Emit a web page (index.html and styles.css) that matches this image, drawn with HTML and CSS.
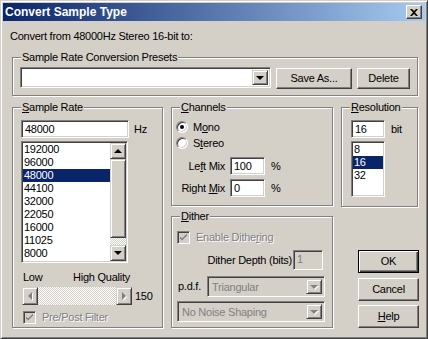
FILE: index.html
```html
<!DOCTYPE html>
<html lang="en">
<head>
  <meta charset="UTF-8" />
  <title>Convert Sample Type</title>
  <link rel="stylesheet" href="styles.css">
</head>
<body>
  <div class="window">
    <div class="titlebar">
      <span class="title">Convert Sample Type</span>
      <button class="close-btn">
        <svg width="8" height="7" viewBox="0 0 8 7"><path d="M0 0h2l2 2 2-2h2L5 3.5 8 7H6L4 5 2 7H0l3-3.5z" fill="#000"/></svg>
      </button>
    </div>

    <div class="dialog">
      <p class="intro">Convert from 48000Hz Stereo 16-bit to:</p>

      <div class="group presets">
        <span class="group-title">Sample Rate Conversion Presets</span>
        <div class="field combo preset-combo">
          <span class="combo-text"></span>
          <span class="drop-btn"><i class="arrow-down"></i></span>
        </div>
        <button class="btn save-btn">Save As...</button>
        <button class="btn delete-btn">Delete</button>
      </div>

      <div class="main-row">
        <!-- sample rate -->
        <div class="group sample-rate">
          <span class="group-title"><u>S</u>ample Rate</span>
          <div class="input-row">
            <div class="field input rate-input">48000</div>
            <span class="unit">Hz</span>
          </div>
          <div class="field listbox rate-list">
            <ul class="items">
              <li>192000</li>
              <li>96000</li>
              <li class="selected">48000</li>
              <li>44100</li>
              <li>32000</li>
              <li>22050</li>
              <li>16000</li>
              <li>11025</li>
              <li>8000</li>
              <li>6000</li>
            </ul>
            <div class="vscroll">
              <span class="sb-btn"><i class="arrow-up"></i></span>
              <span class="sb-btn sb-thumb"></span>
              <span class="sb-track"></span>
              <span class="sb-btn"><i class="arrow-down"></i></span>
            </div>
          </div>
          <div class="quality-labels">
            <span>Low</span>
            <span>High Quality</span>
          </div>
          <div class="slider-row">
            <div class="hscroll">
              <span class="sb-btn"><i class="arrow-left"></i></span>
              <span class="sb-track"></span>
              <span class="sb-btn"><i class="arrow-right"></i></span>
            </div>
            <span class="slider-value">150</span>
          </div>
          <div class="check-row filter-row">
            <span class="field check disabled">
              <svg width="7" height="7" viewBox="0 0 7 7"><path d="M0 2.5l2 2 5-5v2l-5 5-2-2z" fill="#808080"/></svg>
            </span>
            <span class="disabled-text">Pre/Post Filter</span>
          </div>
        </div>

        <!-- channels + dither -->
        <div class="middle-col">
          <div class="group channels">
            <span class="group-title"><u>C</u>hannels</span>
            <div class="radio-row">
              <span class="radio checked"></span>
              <span>M<u>o</u>no</span>
            </div>
            <div class="radio-row">
              <span class="radio"></span>
              <span>S<u>t</u>ereo</span>
            </div>
            <div class="mix-row left-mix">
              <span class="mix-label">Le<u>f</u>t Mix</span>
              <div class="field input mix-input">100</div>
              <span class="unit">%</span>
            </div>
            <div class="mix-row right-mix">
              <span class="mix-label">Right <u>M</u>ix</span>
              <div class="field input mix-input">0</div>
              <span class="unit">%</span>
            </div>
          </div>

          <div class="group dither">
            <span class="group-title"><u>D</u>ither</span>
            <div class="check-row">
              <span class="field check disabled">
                <svg width="7" height="7" viewBox="0 0 7 7"><path d="M0 2.5l2 2 5-5v2l-5 5-2-2z" fill="#808080"/></svg>
              </span>
              <span class="disabled-text">Enable Dithe<u>r</u>ing</span>
            </div>
            <div class="depth-row">
              <span>Dither Depth (bits)</span>
              <div class="field input depth-input disabled">1</div>
            </div>
            <div class="pdf-row">
              <span>p.d.f.</span>
              <div class="field combo pdf-combo disabled">
                <span class="combo-text">Triangular</span>
                <span class="drop-btn"><i class="arrow-down"></i></span>
              </div>
            </div>
            <div class="field combo noise-combo disabled">
              <span class="combo-text">No Noise Shaping</span>
              <span class="drop-btn"><i class="arrow-down"></i></span>
            </div>
          </div>
        </div>

        <!-- resolution + buttons -->
        <div class="right-col">
          <div class="group resolution">
            <span class="group-title"><u>R</u>esolution</span>
            <div class="input-row">
              <div class="field input res-input">16</div>
              <span class="unit">bit</span>
            </div>
            <div class="field listbox res-list">
              <ul class="items">
                <li>8</li>
                <li class="selected">16</li>
                <li>32</li>
              </ul>
            </div>
          </div>
          <button class="btn action-btn default-btn">OK</button>
          <button class="btn action-btn cancel-btn">Cancel</button>
          <button class="btn action-btn help-btn"><u>H</u>elp</button>
        </div>
      </div>
    </div>
  </div>
</body>
</html>
```

FILE: styles.css
```css
* {
  box-sizing: border-box;
  margin: 0;
  padding: 0;
}

body {
  font-family: "Liberation Sans", Arial, sans-serif;
  font-size: 11px;
  line-height: 13px;
  letter-spacing: -0.25px;
  color: #000;
  background: #d4d0c8;
}

button {
  font: inherit;
  color: inherit;
  letter-spacing: inherit;
}

ul {
  list-style: none;
}

/* window frame */
.window {
  width: 428px;
  height: 339px;
  background: #d4d0c8;
  border: 1px solid;
  border-color: #d4d0c8 #404040 #404040 #d4d0c8;
  box-shadow: inset 1px 1px 0 #fff, inset -1px -1px 0 #808080;
  padding: 2px;
}

.titlebar {
  height: 18px;
  display: flex;
  align-items: center;
  justify-content: space-between;
  padding: 0 3px 0 2px;
  background: linear-gradient(to right, #0a246a, #a6caf0);
}

.title {
  color: #fff;
  font-weight: bold;
  font-size: 12px;
  letter-spacing: 0;
}

.close-btn {
  width: 16px;
  height: 14px;
  display: flex;
  align-items: center;
  justify-content: center;
  background: #d4d0c8;
  border: 1px solid;
  border-color: #fff #404040 #404040 #fff;
  box-shadow: inset -1px -1px 0 #808080;
}

/* common 3d pieces */
.btn {
  height: 21px;
  background: #d4d0c8;
  border: 1px solid;
  border-color: #fff #404040 #404040 #fff;
  box-shadow: inset -1px -1px 0 #808080, inset 1px 1px 0 #d4d0c8;
}

.field {
  background: #fff;
  border: 1px solid;
  border-color: #808080 #fff #fff #808080;
  box-shadow: inset 1px 1px 0 #404040, inset -1px -1px 0 #d4d0c8;
}

.field.disabled {
  background: #d4d0c8;
  color: #808080;
}

.disabled-text {
  color: #808080;
  text-shadow: 1px 1px 0 #fff;
}

.input {
  height: 18px;
  padding: 2px 0 0 3px;
}

.combo {
  height: 21px;
  padding: 2px;
  display: flex;
  align-items: stretch;
}

.combo-text {
  flex: 1;
  padding: 2px 0 0 2px;
}

.drop-btn,
.sb-btn {
  width: 16px;
  flex: none;
  display: flex;
  align-items: center;
  justify-content: center;
  background: #d4d0c8;
  border: 1px solid;
  border-color: #d4d0c8 #404040 #404040 #d4d0c8;
  box-shadow: inset 1px 1px 0 #fff, inset -1px -1px 0 #808080;
}

.arrow-down,
.arrow-up,
.arrow-left,
.arrow-right {
  width: 0;
  height: 0;
  border-style: solid;
  border-color: transparent;
}

.arrow-down {
  border-width: 4px 4px 0 4px;
  border-top-color: #000;
}

.arrow-up {
  border-width: 0 4px 4px 4px;
  border-bottom-color: #000;
}

.arrow-left {
  border-width: 4px 4px 4px 0;
  border-right-color: #808080;
  filter: drop-shadow(1px 1px 0 #fff);
}

.arrow-right {
  border-width: 4px 0 4px 4px;
  border-left-color: #808080;
  filter: drop-shadow(1px 1px 0 #fff);
}

.disabled .arrow-down {
  border-top-color: #808080;
  filter: drop-shadow(1px 1px 0 #fff);
}

.sb-track {
  flex: 1;
  background: repeating-conic-gradient(#d4d0c8 0 25%, #fff 0 50%) 0 0 / 2px 2px;
}

.check {
  width: 13px;
  height: 13px;
  display: flex;
  align-items: center;
  justify-content: center;
  flex: none;
}

.radio {
  width: 12px;
  height: 12px;
  flex: none;
  border-radius: 50%;
  background: #fff;
  border: 1px solid;
  border-color: #808080 #fff #fff #808080;
  box-shadow: inset 1px 1px 0 #404040, inset -1px -1px 0 #d4d0c8;
  display: flex;
  align-items: center;
  justify-content: center;
}

.radio.checked::after {
  content: "";
  width: 4px;
  height: 4px;
  border-radius: 50%;
  background: #000;
}

/* group boxes */
.group {
  position: relative;
  border: 1px solid #808080;
  box-shadow: inset 1px 1px 0 #fff, 1px 1px 0 #fff;
}

.group-title {
  position: absolute;
  top: -7px;
  left: 8px;
  padding: 0 1px;
  background: #d4d0c8;
}

/* layout */
.dialog {
  padding: 9px 7px 0 9px;
}

.intro {
  margin-left: -2px;
}

.presets {
  margin-top: 14px;
  height: 39px;
  display: flex;
  align-items: flex-start;
  padding: 9px 0 0 7px;
}

.preset-combo {
  width: 251px;
}

.save-btn {
  width: 76px;
  margin: 1px 0 0 5px;
}

.delete-btn {
  width: 53px;
  margin: 1px 0 0 5px;
}

.main-row {
  margin-top: 11px;
  display: flex;
  gap: 8px;
}

.sample-rate {
  width: 151px;
  height: 221px;
  padding: 12px 0 0 8px;
}

.input-row {
  display: flex;
  align-items: center;
}

.unit {
  margin-left: 5px;
}

.rate-input {
  width: 108px;
}

.listbox {
  margin-top: 3px;
  padding: 1px;
  display: flex;
  overflow: hidden;
}

.rate-list {
  width: 107px;
  height: 122px;
}

.items {
  flex: 1;
  overflow: hidden;
}

.items li {
  height: 13px;
  padding-left: 1px;
}

.items li.selected {
  background: #0a246a;
  color: #fff;
}

.vscroll {
  width: 16px;
  display: flex;
  flex-direction: column;
}

.vscroll .sb-btn {
  height: 16px;
}

.vscroll .sb-thumb {
  height: 79px;
}

.quality-labels {
  width: 109px;
  margin-top: 8px;
  padding-left: 2px;
  display: flex;
  justify-content: space-between;
}

.slider-row {
  margin-top: 3px;
  display: flex;
  align-items: center;
}

.hscroll {
  width: 110px;
  height: 18px;
  margin-left: 1px;
  display: flex;
}

.slider-value {
  margin-left: 3px;
}

.check-row {
  display: flex;
  align-items: center;
  height: 16px;
  gap: 6px;
}

.filter-row {
  margin: 4px 0 0 2px;
}

.middle-col {
  width: 162px;
  display: flex;
  flex-direction: column;
  gap: 10px;
}

.channels {
  height: 99px;
  padding: 11px 0 0 4px;
}

.radio-row {
  height: 16px;
  display: flex;
  align-items: center;
  gap: 5px;
}

.mix-row {
  display: flex;
  align-items: center;
}

.left-mix {
  margin-top: 6px;
}

.right-mix {
  margin-top: 4px;
}

.mix-label {
  width: 49px;
  text-align: right;
  margin-right: 5px;
}

.mix-input {
  width: 35px;
}

.mix-row .unit {
  margin-left: 6px;
}

.dither {
  height: 112px;
  padding: 12px 7px 0 5px;
}

.depth-row {
  margin-top: 5px;
  display: flex;
  align-items: center;
  justify-content: flex-end;
  gap: 1px;
}

.depth-input {
  width: 30px;
  height: 20px;
  margin-right: 2px;
}

.pdf-row {
  margin-top: 6px;
  display: flex;
  align-items: center;
  justify-content: space-between;
  padding-left: 1px;
}

.pdf-combo {
  width: 118px;
}

.noise-combo {
  margin-top: 4px;
}

.right-col {
  width: 77px;
  display: flex;
  flex-direction: column;
  align-items: flex-end;
}

.resolution {
  align-self: stretch;
  height: 100px;
  padding: 12px 0 0 9px;
}

.res-input {
  width: 34px;
}

.resolution .unit {
  margin-left: 6px;
}

.res-list {
  width: 34px;
  height: 56px;
}

.action-btn {
  width: 61px;
  height: 23px;
  margin-right: -1px;
}

.default-btn {
  margin-top: 43px;
  border: 1px solid #000;
  box-shadow: inset 1px 1px 0 #fff, inset -1px -1px 0 #404040, inset -2px -2px 0 #808080;
}

.cancel-btn {
  margin-top: 5px;
}

.help-btn {
  margin-top: 4px;
}
```
